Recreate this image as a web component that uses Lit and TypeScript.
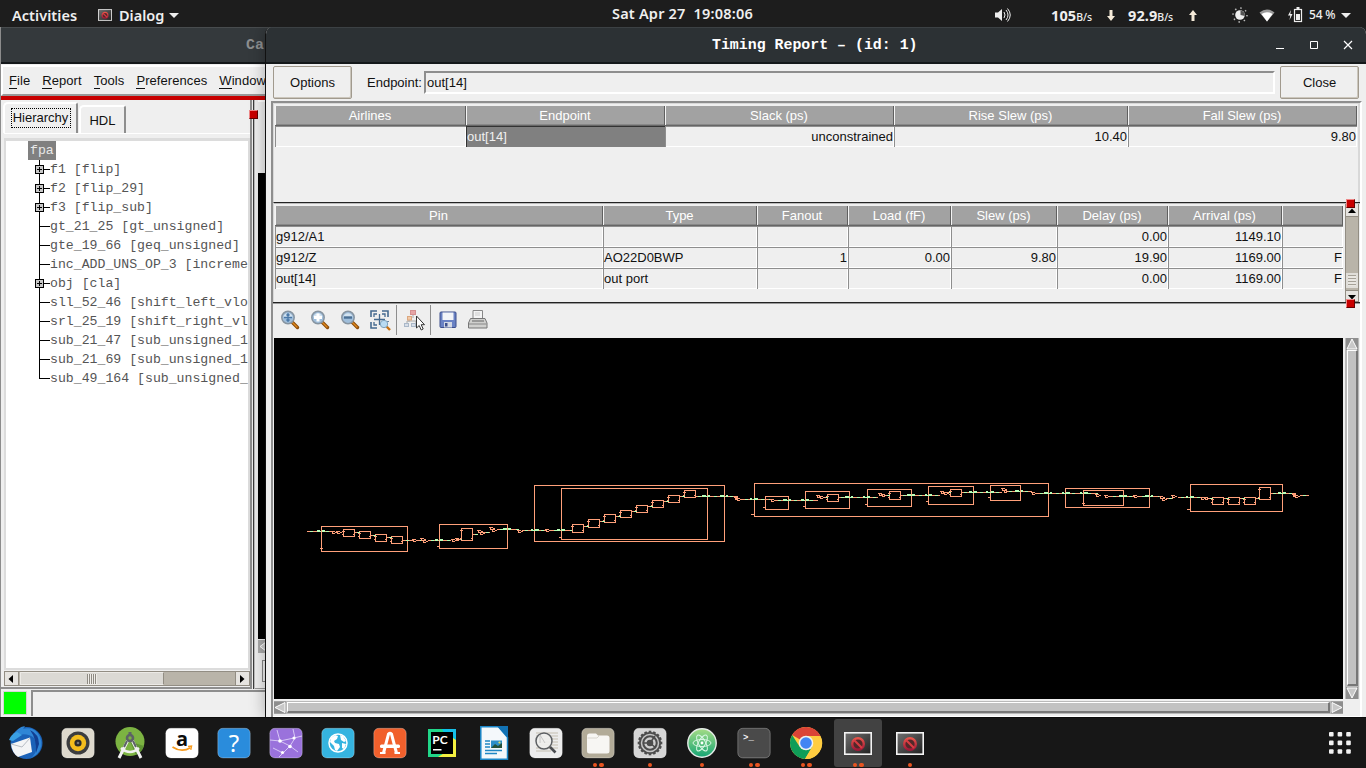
import { LitElement, html, svg, css } from "lit";
import { customElement } from "lit/decorators.js";

/* ---------- schematic data, in screen units of the viewer canvas ---------- */

const BLOCKS: number[][] = [
  [321, 526, 86, 25], [439, 524, 68, 24], [461, 528, 11, 12],
  [343, 529, 11, 7], [359, 531, 11, 7], [375, 534, 11, 7], [391, 536, 11, 7],
  [534, 485, 190, 56], [561, 488, 146, 51],
  [572, 524, 11, 8], [588, 519, 11, 8], [604, 514, 11, 8], [620, 510, 11, 7],
  [636, 505, 11, 7], [652, 500, 11, 7], [668, 495, 11, 7], [684, 490, 11, 7],
  [754, 483, 294, 33], [765, 496, 23, 13], [805, 491, 44, 17], [827, 494, 11, 7],
  [867, 489, 44, 17], [889, 491, 11, 8], [928, 486, 45, 18], [950, 489, 11, 7],
  [990, 485, 30, 15], [1065, 488, 84, 19], [1083, 490, 40, 15],
  [1190, 484, 92, 27], [1212, 497, 11, 7], [1228, 497, 11, 7], [1244, 497, 11, 7],
  [1259, 487, 11, 12],
];

/* x1, x2, y */
const WIRES: number[][] = [
  [307, 333, 531], [354, 360, 532], [370, 376, 535], [386, 392, 537], [403, 413, 540],
  [417, 422, 540], [428, 451, 540], [457, 462, 539], [472, 478, 534], [483, 490, 532],
  [497, 519, 529], [522, 546, 530], [551, 572, 530],
  [583, 589, 526], [599, 605, 521], [615, 621, 516], [631, 637, 511], [647, 653, 506],
  [663, 669, 501], [679, 685, 496], [695, 738, 496], [742, 771, 499], [775, 818, 500],
  [823, 828, 497], [838, 878, 497], [884, 890, 495], [900, 940, 495], [946, 951, 492],
  [961, 1002, 492], [1006, 1032, 491], [1037, 1098, 493], [1110, 1135, 496],
  [1139, 1161, 496], [1166, 1173, 498], [1178, 1201, 497], [1207, 1213, 498],
  [1223, 1229, 498], [1239, 1245, 498], [1255, 1260, 498], [1270, 1296, 493],
  [1300, 1309, 495],
];

/* green port flags: x, y, width */
const PORTS: number[][] = [
  [317, 530, 3], [322, 530, 3], [435, 539, 3], [440, 539, 3], [503, 528, 4], [508, 528, 3],
  [531, 529, 2], [535, 529, 4], [557, 529, 3], [561, 529, 4], [702, 495, 4], [708, 495, 2],
  [720, 495, 4], [726, 495, 2], [750, 498, 2], [754, 498, 4], [783, 499, 4], [789, 499, 2],
  [801, 499, 3], [806, 499, 3], [845, 496, 4], [851, 496, 2], [863, 496, 2], [867, 496, 3],
  [907, 494, 4], [912, 494, 3], [925, 494, 2], [929, 494, 3], [969, 491, 3], [974, 491, 3],
  [986, 491, 2], [991, 491, 3], [1015, 490, 4], [1021, 490, 2], [1044, 492, 4], [1050, 492, 2],
  [1062, 492, 2], [1066, 492, 4], [1080, 492, 2], [1084, 492, 4], [1119, 495, 4], [1124, 495, 3],
  [1145, 495, 4], [1151, 495, 2], [1186, 496, 2], [1190, 496, 4], [1278, 492, 3], [1283, 492, 3],
];

const GATES: number[][] = [
  [332, 532], [337, 532], [413, 540], [421, 539], [423, 541], [452, 540], [456, 539],
  [478, 531], [480, 533], [490, 528], [492, 530], [518, 531], [546, 530],
  [735, 498], [737, 499], [771, 500], [817, 496], [820, 497], [879, 494], [882, 495],
  [941, 492], [944, 493], [1002, 489], [1004, 491], [1032, 493], [1096, 495], [1105, 496],
  [1134, 496], [1160, 497], [1162, 499], [1172, 496], [1201, 498], [1205, 498],
  [1293, 495], [1295, 496],
];

const STUBS: number[][] = [
  [321, 548], [438, 546], [560, 537], [752, 514], [764, 507], [804, 506], [866, 504],
  [927, 501], [989, 497], [1083, 503], [1188, 509],
];

function schematic() {
  const smallBlocks = BLOCKS.filter((b) => b[2] === 11);
  return svg`
    ${BLOCKS.map((b) => svg`<rect x=${b[0] + 0.5} y=${b[1] + 0.5} width=${b[2]} height=${b[3]}></rect>`)}
    ${smallBlocks.map((b) => svg`<path d="M${b[0] - 1} ${b[1] + 2.5}h3M${b[0] - 1} ${b[1] + b[3] - 1.5}h2M${b[0] + 10} ${b[1] + b[3] - 1.5}h2"></path>`)}
    ${WIRES.map((w) => svg`<path d="M${w[0]} ${w[2] + 0.5}H${w[1]}"></path>
      <path class="live" d="M${w[0] + 3} ${w[2] + 0.5}H${w[1]}"></path>`)}
    ${GATES.map(([x, y]) => svg`<path d="M${x + 0.5} ${y - 1}v3M${x - 1} ${y - 0.5}h4M${x} ${y + 1.5}h3M${x + 3} ${y + 0.5}h2"></path>`)}
    ${STUBS.map((s) => svg`<path d="M${s[0] - 1} ${s[1] + 0.5}h3"></path>`)}
    ${PORTS.map((p) => svg`<rect class="port" x=${p[0]} y=${p[1]} width=${p[2]} height="2"></rect>`)}
  `;
}

/* ---------- table data ---------- */

const ENDPOINT_HEAD = ["Airlines", "Endpoint", "Slack (ps)", "Rise Slew (ps)", "Fall Slew (ps)"];
const PIN_HEAD = ["Pin", "Type", "Fanout", "Load (fF)", "Slew (ps)", "Delay (ps)", "Arrival (ps)", ""];
const PIN_ROWS = [
  ["g912/A1", "", "", "", "", "0.00", "1149.10", ""],
  ["g912/Z", "AO22D0BWP", "1", "0.00", "9.80", "19.90", "1169.00", "F"],
  ["out[14]", "out port", "", "", "", "0.00", "1169.00", "F"],
];

const TREE: { label: string; branch?: boolean }[] = [
  { label: "f1 [flip]", branch: true },
  { label: "f2 [flip_29]", branch: true },
  { label: "f3 [flip_sub]", branch: true },
  { label: "gt_21_25 [gt_unsigned]" },
  { label: "gte_19_66 [geq_unsigned]" },
  { label: "inc_ADD_UNS_OP_3 [increme" },
  { label: "obj [cla]", branch: true },
  { label: "sll_52_46 [shift_left_vlo" },
  { label: "srl_25_19 [shift_right_vl" },
  { label: "sub_21_47 [sub_unsigned_1" },
  { label: "sub_21_69 [sub_unsigned_1" },
  { label: "sub_49_164 [sub_unsigned_" },
];

/* ---------- icons ---------- */

const lens = (mark: unknown) => html`<svg class="tool" width="22" height="22" viewBox="0 0 22 22">
  <path d="M13 13l5.500 5.500" stroke="#8a4a08" stroke-width="3.400" stroke-linecap="round"></path>
  <path d="M13 13l5 5" stroke="#e08a20" stroke-width="1.400" stroke-linecap="round"></path>
  <circle cx="9" cy="8.500" r="6.200" fill="#9fbedb" stroke="#8794a0" stroke-width="1.500"></circle>
  <path d="M4.500 8a4.600 4.600 0 0 1 9 0q-4.500 2-9 0z" fill="#d3e3f0"></path>${mark}</svg>`;

const dialogIcon = (w: number, h: number) => html`<svg width=${w} height=${h} viewBox="0 0 28 23">
  <defs><linearGradient id="dg" x1="0" y1="0" x2="1" y2="1"><stop offset="0" stop-color="#707070"></stop><stop offset="1" stop-color="#202020"></stop></linearGradient>
  <linearGradient id="rd" x1="0" y1="0" x2="0" y2="1"><stop offset="0" stop-color="#e8544a"></stop><stop offset="1" stop-color="#a01838"></stop></linearGradient></defs>
  <rect x=".8" y=".8" width="26.400" height="21.400" fill="url(#dg)" stroke="#f4f4f4" stroke-width="1.600"></rect>
  <circle cx="14" cy="12" r="5.800" fill="#52282a" stroke="url(#rd)" stroke-width="2.400"></circle>
  <path d="M10 8l8 8" stroke="#d83c42" stroke-width="2.200"></path></svg>`;

const tile = (fill: string, inner: unknown) => html`<svg width="34" height="34" viewBox="0 0 34 34">
  <rect x=".8" y="2.300" width="32.400" height="29.600" rx="5" fill=${fill} stroke="#ffffff" stroke-opacity=".28"></rect>${inner}</svg>`;

const star = [0, 60, 120].map((a) => svg`<ellipse cx="17" cy="17" rx="9" ry="3.500" transform="rotate(${a} 17 17)" fill="none" stroke="#d9f7e4" stroke-width="1"></ellipse>`);
const teeth = Array.from({ length: 16 }, (_, i) => svg`<rect x="15.700" y="4.700" width="2.600" height="4" fill="#4d4d4d" transform="rotate(${i * 22.5} 17 17)"></rect>`);

const DOCK: { icon: unknown; dots: number; active?: boolean }[] = [
  { dots: 0, icon: html`<svg width="36" height="36" viewBox="0 0 36 36">
    <circle cx="18.500" cy="18" r="16" fill="#1b62b8"></circle>
    <path d="M4 12Q9 2 17 1L15 4q12-3 17 8q4 10-3 17l-7 5Q33 25 26 13Q18 6 4 12z" fill="#2f86d6"></path>
    <path d="M22 5q9 4 9 14l-3 9q1-14-6-23z" fill="#123f92"></path>
    <path d="M1 15q2-6 8-8l5 3-9 6z" fill="#3aa0e4"></path>
    <path d="M3 19L22 12.500 24 27 10 32Q4 28 3 19z" fill="#f3f4f6"></path>
    <path d="M3 19l11 3 8-9" fill="none" stroke="#b7bcc4" stroke-width="1"></path>
    <path d="M2 23l2 5 4 3q-5-3-6-8z" fill="#2a1560"></path></svg>` },
  { dots: 0, icon: tile("#ded9cd", svg`<circle cx="17" cy="17" r="11.500" fill="#3c3d3f"></circle><circle cx="17" cy="17" r="8.200" fill="#f4bd1c"></circle><circle cx="17" cy="17" r="3.600" fill="#2b2b2b"></circle><circle cx="17" cy="17" r="1.300" fill="#777"></circle>`) },
  { dots: 0, icon: html`<svg width="34" height="34" viewBox="0 0 34 34">
    <circle cx="17" cy="15.500" r="14.500" fill="#7cb342"></circle><path d="M17 15.500L31 20a14.500 14.500 0 0 1-8 9z" fill="#5f9433"></path>
    <path d="M15 14L6 32M19 14l9 18" stroke="#f1f1f1" stroke-width="3"></path><path d="M8 22q9 8 18 0" fill="none" stroke="#f1f1f1" stroke-width="2.400"></path>
    <circle cx="17" cy="12" r="3" fill="none" stroke="#5d6266" stroke-width="2.600"></circle><rect x="15.500" y="6" width="3" height="4" fill="#5d6266"></rect><path d="M14 15l-3 6M20 15l3 6" stroke="#5d6266" stroke-width="2"></path></svg>` },
  { dots: 0, icon: tile("#ffffff", svg`<text x="17" y="20" text-anchor="middle" font-family="Open Sans, sans-serif" font-weight="700" font-size="20" fill="#0b0b0b">a</text>
    <path d="M7.500 21q9 6 18 .8" fill="none" stroke="#f79a1c" stroke-width="1.700"></path><path d="M23 20.500l3.600-.5-.8 3.800" fill="none" stroke="#f79a1c" stroke-width="1.300"></path>`) },
  { dots: 0, icon: tile("#2a8cdc", svg`<text x="17" y="25.500" text-anchor="middle" font-family="Noto Sans, sans-serif" font-size="24" fill="#ffffff">?</text>`) },
  { dots: 0, icon: tile("#9a72dc", svg`<path d="M1 14l10 1 14-3 8-2M11 15l10 5 5-8-2-9M21 20l-7 7-4 4M14 27L4 22M21 20l8 6M11 15L8 4" stroke="#d8c8f6" stroke-width="1" fill="none"></path>
    <circle cx="11" cy="15" r="1.800" fill="#fff"></circle><circle cx="25" cy="12" r="1.600" fill="#fff"></circle><circle cx="21" cy="20.500" r="1.800" fill="#fff"></circle><circle cx="13.500" cy="26.500" r="1.600" fill="#fff"></circle>`) },
  { dots: 0, icon: tile("#35b4e0", svg`<circle cx="17" cy="17" r="9" fill="none" stroke="#ffffff" stroke-width="1.500"></circle>
    <path d="M10 12l4-3 3 1-1 3-3 2 1 2 4 1 1 3-3 4-2-1-1-4-4-4zM19 9l3 1 3 5-2 1-3-2zM21 17l4 1-2 5-2-1z" fill="#fff"></path>`) },
  { dots: 0, icon: tile("#f1602c", svg`<path d="M10.500 27L15.500 8q1.500-1.500 3 0l5 19" fill="none" stroke="#fff" stroke-width="3"></path><rect x="7" y="18.500" width="20" height="3.600" rx="1.500" fill="#fff"></rect><path d="M7 27h5.500M21.500 27H27" stroke="#fff" stroke-width="2.200"></path>`) },
  { dots: 0, icon: html`<svg width="34" height="34" viewBox="0 0 34 34"><rect x="3" y="3" width="28" height="28" fill="#21d789"></rect><path d="M17 3h9l5 5v9l-8-2z" fill="#08c4ea"></path><path d="M22 3h9v9z" fill="#17c0e8"></path><path d="M25 10l6 4v17H13l8-5z" fill="#f4f040"></path>
    <rect x="6" y="6" width="22" height="22" fill="#000"></rect><text x="7.300" y="17.800" font-family="Lato, sans-serif" font-weight="700" font-size="12" fill="#fff">PC</text><rect x="8" y="23" width="8.500" height="1.500" fill="#fff"></rect></svg>` },
  { dots: 0, icon: html`<svg width="34" height="36" viewBox="0 0 34 36"><path d="M3.800 1.800h17.700l9 10.500v22H3.800z" fill="#f4f8fb" stroke="#1a86c8" stroke-width="1.500"></path><path d="M20 1h11v12z" fill="#1272b4"></path>
    <path d="M8 16h5M8 19h5M8 22h5M8 25.500h17M8 28.500h12" stroke="#1f86c4" stroke-width="1.400"></path><rect x="14" y="15.500" width="11" height="7.500" fill="#2c8fc9"></rect><path d="M14 23l4-4 3 2 4-3v5z" fill="#25523a"></path><circle cx="22.500" cy="17.500" r="1.100" fill="#e8e25a"></circle></svg>` },
  { dots: 0, icon: tile("#ececec", svg`<path d="M7 7h22M7 10h22M7 13h22M7 16h22M7 19h22M7 22h22M7 25h15" stroke="#c4beb0" stroke-width="1"></path><circle cx="15" cy="15" r="8" fill="#efefee" fill-opacity=".92" stroke="#5c5f63" stroke-width="1.500"></circle><path d="M11 17V9l5 8" fill="none" stroke="#c8c8c8"></path><path d="M21 21l5.500 5.500" stroke="#4a4c50" stroke-width="2.600"></path>`) },
  { dots: 2, icon: tile("#b2ab98", svg`<path d="M6 10.500q0-3 2.500-3h6.500l2 2h9q2.500 0 2.500 2.500v13q0 2.500-2.500 2.500H8.500Q6 27.500 6 25z" fill="#f7f6f3"></path><path d="M6.500 12h9.500l2-2" fill="none" stroke="#d9d6cf"></path>`) },
  { dots: 1, icon: tile("#d6d6d6", svg`${teeth}<circle cx="17" cy="17" r="11" fill="#4d4d4d"></circle><circle cx="17" cy="17" r="8.500" fill="none" stroke="#c6c6c6" stroke-width="1.500"></circle><circle cx="17" cy="17" r="4.500" fill="none" stroke="#d0d0d0" stroke-width="2.400"></circle><path d="M17 17L22 10M17 17l6 5M17 17H10" stroke="#4d4d4d" stroke-width="1.600"></path><circle cx="17" cy="17" r="2.800" fill="#4d4d4d"></circle>`) },
  { dots: 1, icon: html`<svg width="34" height="34" viewBox="0 0 34 34"><defs><linearGradient id="at" x1="0" y1="0" x2="0" y2="1"><stop offset="0" stop-color="#a5dc86"></stop><stop offset="1" stop-color="#15a574"></stop></linearGradient></defs><circle cx="17" cy="17" r="14.200" fill="url(#at)" stroke="#e6ebe8" stroke-width="1.400"></circle>${star}<circle cx="17" cy="17" r="1.400" fill="#fff"></circle></svg>` },
  { dots: 2, icon: tile("#4a4a4a", svg`<text x="6" y="14" font-family="Liberation Mono, monospace" font-weight="700" font-size="9" fill="#f2f2f2">&gt;_</text>`) },
  { dots: 2, icon: html`<svg width="34" height="34" viewBox="0 0 34 34"><circle cx="17" cy="17" r="16" fill="#ffcd40"></circle><path d="M17 17L3.140 9A16 16 0 0 1 31.500 10H17z" fill="#db4437"></path><path d="M3.140 9A16 16 0 0 0 16 33L23.500 20.800 17 17 10.500 20.500z" fill="#0f9d58"></path><path d="M16 33l7-12 8.500-11A16 16 0 0 1 16 33z" fill="#ffcd40"></path><circle cx="17" cy="17" r="7.300" fill="#f1f1f1"></circle><circle cx="17" cy="17" r="5.800" fill="#4285f4"></circle></svg>` },
  { dots: 2, active: true, icon: dialogIcon(28, 23) },
  { dots: 1, icon: dialogIcon(28, 23) },
];

const arrow = (d: string) => html`<svg width="14" height="12" viewBox="0 0 14 12"><path d=${d} fill="#000"></path></svg>`;

@customElement("app-root")
export class AppRoot extends LitElement {
  static styles = css`
    :host { display: flex; flex-direction: column; width: 1366px; height: 768px; overflow: hidden; background: #171717; font: 13px "Liberation Sans", Arial, sans-serif; color: #111; white-space: pre; }
    * { box-sizing: border-box; }
    svg { display: block; flex: none; }

    /* top bar */
    .topbar { height: 27px; flex: none; display: grid; grid-template-columns: 612px 142px 1fr; background: #1d1d1d; color: #efefef; font: 600 14.500px "Noto Sans", sans-serif; line-height: 26px; }
    .left { display: flex; align-items: center; padding-left: 12px; }
    .activities { width: 86px; letter-spacing: .05px; }
    .appname { padding-left: 7px; width: 57px; letter-spacing: 0; }
    .date { letter-spacing: .2px; }
    .right { display: flex; align-items: center; padding-left: 240px; }
    .net { display: flex; align-items: baseline; font-weight: 700; padding-top: 2px; letter-spacing: .1px; }
    .net small { font-size: 10.500px; font-weight: 500; letter-spacing: -.1px; }
    .down { width: 77px; margin-left: 39px; }
    .up { width: 104px; }
    .dir { margin-left: auto; margin-right: 13px; align-self: center; }
    .up .dir { margin-right: 35px; }
    .sun { margin-right: 11px; }
    .wifi { margin-right: 13px; }
    .pct { font-size: 12px; font-weight: 500; width: 32px; padding-left: 6px; letter-spacing: -.2px; }
    .endcaret { margin-left: auto; margin-right: 15px; }

    /* desktop with overlapping windows */
    .desktop { height: 690px; flex: none; position: relative; overflow: hidden; background: #222526; }
    .back { position: absolute; left: 0; top: 0; width: 272px; height: 690px; overflow: hidden; display: flex; flex-direction: column; border-left: 1px solid #8c8c8c; background: #efefef; }
    .front { position: absolute; left: 265px; top: 0; width: 1101px; height: 690px; display: flex; flex-direction: column; border-left: 1px solid #111; background: #efefef; box-shadow: 0 0 16px rgba(0,0,0,.3); border-radius: 7px 7px 0 0; overflow: hidden; }
    .title { height: 37px; flex: none; font: 700 14.900px "Liberation Mono", monospace; line-height: 36px; border-bottom: 2px solid #14181a; }
    .back .title { background: #34393c; color: #8c8e8f; padding-left: 246px; margin-left: -1px; border-top: 1px solid #484c4e; position: relative; line-height: 34px; }
    .front .title { display: flex; align-items: center; background: #2c3134; color: #fff; padding-left: 446px; border-top: 1px solid #3c4144; line-height: 34px; }
    .controls { display: flex; align-items: center; margin-left: auto; padding-right: 13px; gap: 23px; }

    /* back window */
    .menu { height: 31px; flex: none; display: flex; align-items: center; padding-left: 6px; gap: 12px; border-top: 2px solid #fff; border-left: 2px solid #fff; border-bottom: 2px solid #999; margin-top: 1px; }
    .menu u { text-decoration: none; border-bottom: 1px solid #111; }
    .menu span { line-height: 14px; letter-spacing: .07px; }
    .red { height: 4px; background: #c80000; flex: none; }
    .work { height: 589px; flex: none; display: flex; position: relative; }
    .pane { width: 251px; flex: none; display: flex; flex-direction: column; padding-left: 3px; border-right: 2px solid #8e8e8e; border-bottom: 2px solid #8e8e8e; }
    .tabs { display: flex; align-items: flex-end; height: 33px; padding-top: 2px; flex: none; }
    .tab { display: flex; align-items: center; justify-content: center; border-top: 2px solid #fff; border-left: 2px solid #fff; border-right: 2px solid #8e8e8e; border-radius: 5px 3px 0 0; }
    .tab.on { width: 75px; height: 31px; margin-left: -1px; }
    .tab.off { width: 47px; height: 28px; margin-left: 1px; }
    .focus { border: 1px dotted #000; height: 20px; width: 60px; line-height: 18px; text-align: center; margin-top: -2px; }
    .sheet { flex: 1; display: flex; flex-direction: column; padding-top: 4px; border-top: 1px solid #fff; min-height: 0; }
    .tree { flex: 1; background: #fff; border: 2px solid #dcdcdc; border-top-width: 3px; overflow: hidden; padding-left: 22px; color: #555; font: 13.200px "Liberation Mono", monospace; }
    .root { display: block; width: 28px; height: 19px; line-height: 19px; background: #808080; color: #e8e8e8; padding-left: 2px; }
    .node { display: flex; height: 19px; line-height: 19px; }
    .hbar { height: 15px; margin: 1px 0; flex: none; display: flex; background: #b9b4a9; border: 1px solid #928d83; }
    .hbtn { width: 14px; background: #e6e4e0; display: flex; align-items: center; border-right: 1px solid #928d83; }
    .hthumb { width: 144px; background: #dbd9d4; border: 1px solid #eceae6; border-right-color: #928d83; margin-left: 1px; display: flex; align-items: center; justify-content: center; }
    .grip { width: 10px; height: 10px; background: repeating-linear-gradient(90deg, #8e8a82 0 1px, #efede9 1px 2px); }
    .hbar .last { margin-left: auto; border-left: 1px solid #928d83; border-right: 0; }
    .sash { width: 2px; margin-left: 1px; background: #3c3c3c; border-right: 1px solid #bbb; }
    .knob { position: absolute; width: 9px; height: 9px; background: #c80000; border: 1px solid #e88; border-right-color: #600; border-bottom-color: #600; }
    .k0 { left: 248px; top: 10px; }
    .viewer { flex: 1; display: flex; flex-direction: column; padding-left: 3px; border-bottom: 1px solid #999; }
    .viewer .tabtop { height: 73px; border-top: 2px solid #fff; }
    .viewer .ink { height: 466px; background: #000; }
    .viewer .sc { height: 13px; margin-top: 1px; background: #aaa; }
    .viewer .fr { height: 22px; margin: 7px 0 0 4px; border: 1px solid #888; border-right: 0; }
    .status { flex: 1; display: flex; padding-top: 1px; }
    .lamp { width: 24px; height: 24px; margin: 1px 5px 0 2px; border: 1px solid #d5d5d5; background: #00ff00; }
    .field { flex: 1; border-top: 2px solid #8e8e8e; border-left: 2px solid #8e8e8e; height: 26px; margin-left: -1px; }

    /* front window */
    .bar { height: 37px; flex: none; display: flex; padding: 2px 6px 0 7px; }
    .button { width: 79px; height: 33px; border: 1px solid #a19a8e; border-radius: 2px; box-shadow: inset -1px -1px 0 #cbc6bc; display: flex; align-items: center; justify-content: center; }
    .lbl { width: 72px; padding-left: 15px; line-height: 33px; }
    .entry { width: 851px; height: 23px; margin-top: 5px; margin-right: 5px; border: 2px solid #fff; border-top-color: #8e8e8e; border-left-color: #8e8e8e; line-height: 20px; padding-left: 1px; }
    .body { flex: 1; margin-left: 5px; width: 1091px; border-top: 2px solid #8e8e8e; border-left: 2px solid #8e8e8e; border-right: 2px solid #fff; display: flex; flex-direction: column; position: relative; box-shadow: inset 0 -1px 0 #fff; }
    .box { padding: 3px 0 0 1px; border-left: 1px solid #d8d8d8; flex: none; }
    .top { height: 99px; border-top: 1px solid #d8d8d8; border-right: 2px solid #d8d8d8; padding-top: 2px; }
    .g1 { display: grid; grid-template-columns: 191px 199px 229px 234px 229px; }
    .g2 { display: grid; grid-template-columns: 328px 154px 91px 103px 106px 111px 114px 61px; }
    .th { height: 20px; background: #a2a2a2; color: #fff; line-height: 20px; text-align: center; border-right: 1px solid #606060; border-bottom: 1px solid #666; box-shadow: inset 1px 0 0 #f4f4f4, inset 0 -1px 0 #888; }
    .td { height: 21px; line-height: 20px; text-align: right; border-left: 1px solid #8e8e8e; border-top: 1px solid #8e8e8e; box-shadow: inset -1px -1px 0 #fff; padding-right: 1px; }
    .td.txt { text-align: left; }
    .td.pick { background: #808080; color: #f0f0f0; border-color: #333; box-shadow: none; }
    .mid { height: 100px; display: flex; border-top: 1px solid #222; box-shadow: inset 0 1px 0 #bbb; border-left: 1px solid #d8d8d8; flex: none; }
    .mid .pins { width: 1070px; padding: 3px 0 0 1px; }
    .vbar { width: 14px; margin-left: 1px; background: #b9b4a9; display: flex; flex-direction: column; border: 1px solid #928d83; border-top: 0; border-bottom: 0; margin-top: 1px; }
    .vbtn { height: 13px; background: #e6e4e0; border-bottom: 1px solid #928d83; }
    .vthumb { height: 15px; margin-top: 56px; background: repeating-linear-gradient(#a5a197 0 1px, #e9e7e2 1px 3px); border: 2px solid #e0ded9; }
    .vbar .last { margin-top: 2px; border-top: 1px solid #928d83; height: 12px; }
    .tools { height: 36px; flex: none; border-top: 1px solid #222; box-shadow: inset 0 1px 0 #999; display: flex; align-items: center; padding-left: 6px; padding-bottom: 2px; }
    .tool { margin-right: 8px; }
    .sep { width: 1px; height: 30px; background: #8e8e8e; margin-right: 6px; margin-left: -3px; }
    .k1 { left: 1073px; top: 96px; }
    .k2 { left: 1073px; top: 196px; }
    .stage { height: 361px; flex: none; display: flex; padding-left: 1px; }
    .canvas { width: 1069px; height: 361px; background: #000; }
    .canvas * { fill: none; stroke: #ffa07a; stroke-width: 1; shape-rendering: crispEdges; }
    .canvas .live { stroke: #b4ffb4; stroke-dasharray: 3 5; }
    .canvas .port { fill: #b8ffb8; stroke: none; }
    .mbar { background: #b9b9b9; display: flex; }
    .mbar.v { width: 14px; margin-left: 2px; flex-direction: column; }
    .mbar.h { height: 13px; width: 1069px; margin: 2px 0 0 1px; }
    .mthumb { flex: 1; background: #c2c2c2; border: 1px solid #fff; border-right: 2px solid #777; border-bottom: 2px solid #777; }
    .v .mthumb { border-right-width: 2px; margin: 0 1px 1px 2px; }
    .h .mthumb { margin: 1px 1px; }

    /* dock */
    .dock { height: 51px; flex: none; background: #171717; display: flex; align-items: flex-start; padding: 1px 0 0 2px; border-top: 1px solid #0c0c0c; }
    .slot { width: 48px; height: 48px; margin-right: 4px; display: grid; place-items: center; position: relative; border-radius: 3px; flex: none; }
    .slot.active { background: #424242; }
    .dots { position: absolute; left: 0; right: 0; bottom: 0; display: flex; justify-content: center; gap: 2px; }
    .dots i { width: 4.500px; height: 4.500px; border-radius: 50%; background: #e95420; }
    .apps { margin: 13px 0 0 391px; }
  `;

  private nodeMark(branch: boolean, last: boolean) {
    return html`<svg width="22" height="19" viewBox="0 0 22 19" shape-rendering="crispEdges">
      <path d="M11.500 0V${last ? 10 : 19}M11 9.500H22" stroke="#000" fill="none"></path>
      ${branch ? svg`<rect x="7.500" y="5.500" width="8" height="8" fill="#c8c8c8" stroke="#000"></rect><path d="M9 9.500h5M11.500 7v5" stroke="#000"></path>` : ""}
    </svg>`;
  }

  private topbar() {
    return html`<div class="topbar">
      <div class="left"><span class="activities">Activities</span>${dialogIcon(14, 12)}<span class="appname">Dialog</span>
        <svg width="10" height="5"><path d="M0 0h10l-5 5z" fill="#eee"></path></svg></div>
      <div class="date">Sat Apr 27  19:08:06</div>
      <div class="right">
        <svg width="18" height="16" viewBox="0 0 18 16"><path d="M1 5.500h3L8 2v12L4 10.500H1z" fill="#eee"></path><path d="M10 5q2 3 0 6M12 3q4 5 0 10M13.500 1.500q5.500 6.500 0 13" stroke="#eee" fill="none"></path></svg>
        <div class="net down">105<small>B/s</small><svg class="dir" width="8" height="12"><path d="M2.500 0h3v6H8l-4 5-4-5h2.500z" fill="#f4ead8"></path></svg></div>
        <div class="net up">92.9<small>B/s</small><svg class="dir" width="8" height="12"><path d="M2.500 11h3V5H8L4 0 0 5h2.500z" fill="#f4ead8"></path></svg></div>
        <svg class="sun" width="16" height="16" viewBox="0 0 16 16"><circle cx="8" cy="8" r="7" fill="none" stroke="#bbb" stroke-width="1.500" stroke-dasharray="1.500 4"></circle><circle cx="8" cy="8" r="4.800" fill="#eee"></circle><path d="M8.500 3.200V8l4.300 1A5 5 0 0 0 8.500 3.200z" fill="#555"></path></svg>
        <svg class="wifi" width="16" height="13" viewBox="0 0 16 13"><path d="M.5 3.500q7.500-6 15 0L8 12.500z" fill="#9a9a9a"></path><path d="M2.500 5q5.500-3.500 11 0L8 12.500z" fill="#fff"></path></svg>
        <svg width="15" height="16" viewBox="0 0 15 16"><path d="M3 3L0 8.500h2.300L1.500 13 4.500 7H2.300z" fill="#eee"></path><rect x="6.500" y="2.500" width="7" height="12" fill="none" stroke="#eee" stroke-width="1.200"></rect><rect x="8.500" y="0" width="3" height="2" fill="#eee"></rect><rect x="8" y="7" width="4" height="6" fill="#eee"></rect></svg>
        <span class="pct">54 %</span>
        <svg class="endcaret" width="10" height="5"><path d="M0 0h10l-5 5z" fill="#eee"></path></svg>
      </div></div>`;
  }

  private backWindow() {
    const menu = ["File", "Report", "Tools", "Preferences", "Window"];
    return html`<section class="back">
      <div class="title">Ca</div>
      <div class="menu">${menu.map((m) => html`<span><u>${m[0]}</u>${m.slice(1)}</span>`)}</div>
      <div class="red"></div>
      <div class="work">
        <div class="pane">
          <div class="tabs"><div class="tab on"><span class="focus">Hierarchy</span></div><div class="tab off">HDL</div></div>
          <div class="sheet">
            <div class="tree"><span class="root">fpa</span>${TREE.map((n, i) => html`<div class="node">${this.nodeMark(!!n.branch, i === TREE.length - 1)}<span>${n.label}</span></div>`)}</div>
            <div class="hbar"><div class="hbtn">${arrow("M8 2v8L3.500 6z")}</div><div class="hthumb"><div class="grip"></div></div><div class="hbtn last">${arrow("M4 2v8L8.500 6z")}</div></div>
          </div>
        </div>
        <div class="sash"></div>
        <div class="viewer"><div class="tabtop"></div><div class="ink"></div><div class="sc"><svg width="8" height="13"><path d="M8 2L2 6.500 8 11z" fill="#ccc" stroke="#fff"></path></svg></div><div class="fr"></div></div>
        <i class="knob k0"></i>
      </div>
      <div class="status"><div class="lamp"></div><div class="field"></div></div>
    </section>`;
  }

  private frontWindow() {
    const tri = (d: string, w = 12, h = 12) => html`<svg width=${w} height=${h} viewBox="0 0 12 12"><rect width="12" height="12" fill="#8e8e8e"></rect><path d=${d} fill="#c8c8c8" stroke="#fff" stroke-width="1"></path></svg>`;
    return html`<section class="front">
      <div class="title"><span>Timing Report – (id: 1)</span>
        <div class="controls">
          <svg width="10" height="12"><path d="M0 9.500h8" stroke="#fff"></path></svg>
          <svg width="11" height="12"><path d="M1.500 2.500h7v7h-7z" fill="none" stroke="#fff"></path></svg>
          <svg width="10" height="12"><path d="M1 2l8 8M9 2l-8 8" stroke="#fff" stroke-width="1.200"></path></svg>
        </div></div>
      <div class="bar"><div class="button">Options</div><div class="lbl">Endpoint:</div><div class="entry">out[14]</div><div class="button">Close</div></div>
      <div class="body">
        <div class="box top"><div class="g1">
          ${ENDPOINT_HEAD.map((h) => html`<div class="th">${h}</div>`)}
          <div class="td"></div><div class="td txt pick">out[14]</div><div class="td">unconstrained</div><div class="td">10.40</div><div class="td">9.80</div>
        </div></div>
        <div class="mid"><div class="pins"><div class="g2">
          ${PIN_HEAD.map((h) => html`<div class="th">${h}</div>`)}
          ${PIN_ROWS.map((r) => r.map((c, i) => html`<div class=${i < 2 ? "td txt" : "td"}>${c}</div>`))}
        </div></div>
          <div class="vbar"><div class="vbtn">${arrow("M2 9h8L6 4.500z")}</div><div class="vthumb"></div><div class="vbtn last">${arrow("M2 4h8L6 8.500z")}</div></div>
        </div>
        <div class="tools">
          ${lens(svg`<path d="M9 4.500v8M5 8.500h8M7.500 6.500L9 4.800l1.500 1.700M7.500 10.500L9 12.200l1.500-1.700" stroke="#4a78a8" stroke-width="1.300" fill="none"></path>`)}
          ${lens(svg`<path d="M9 4.500v8M5 8.500h8" stroke="#fff" stroke-width="3"></path>`)}
          ${lens(svg`<path d="M5 8.500h8" stroke="#4a7096" stroke-width="2.400"></path>`)}
          <svg class="tool" width="22" height="22" viewBox="0 0 22 22"><path d="M2 8V2h6M13 2h6v6M19 12v1M2 13v6h6" fill="none" stroke="#456a90" stroke-width="1.600"></path><path d="M5 8V5h3M13 5h3v3M5 13v3h3M10.500 5v11M5 10.500h11" fill="none" stroke="#456a90" stroke-width="1.300"></path><path d="M17 17l4 4" stroke="#c87010" stroke-width="2.400"></path><circle cx="15" cy="15" r="3.700" fill="#b9dbf2" stroke="#7fa3bd"></circle></svg>
          <i class="sep"></i>
          <svg class="tool" width="22" height="22" viewBox="0 0 22 22"><path d="M10 5v4M4 15v-3h9v3M6 9v4" stroke="#aaa" fill="none"></path><rect x="7.500" y="1.500" width="5" height="4" fill="#e6a5a5" stroke="#d49090"></rect><rect x="4.500" y="7.500" width="4" height="3.500" fill="#f2c9a8" stroke="#dba880"></rect><rect x="1.500" y="14.500" width="4" height="3" fill="#d7dee8" stroke="#aab8c8"></rect><rect x="8.500" y="14.500" width="4" height="3" fill="#d7dee8" stroke="#aab8c8"></rect><path d="M13.500 7v12l2.700-2.500 2 4.500 2-1-2-4.300h3.300z" fill="#fff" stroke="#333"></path></svg>
          <i class="sep"></i>
          <svg class="tool" width="22" height="22" viewBox="0 0 22 22"><rect x="3" y="3" width="16" height="15.500" rx="1" fill="#6a82c4" stroke="#3c4f8c"></rect><rect x="5.500" y="3.500" width="11" height="7.500" fill="#f2f4f8"></rect><rect x="7" y="13" width="8" height="5.500" fill="#d4d9e4"></rect><rect x="8" y="14" width="2.500" height="3.500" fill="#3c4f8c"></rect></svg>
          <svg class="tool" width="22" height="22" viewBox="0 0 22 22"><path d="M6 1.500h9.500v9H6z" fill="#f4f4f4" stroke="#888"></path><path d="M8 4h5M8 6h5" stroke="#ccc"></path><path d="M3.500 9.500h14.500l2 4.500v5h-18.500v-5z" fill="#d0d0ce" stroke="#777"></path><path d="M2 15h17.500" stroke="#888"></path><path d="M5 12h12" stroke="#8c8c8c" stroke-width="1.600"></path></svg>
        </div>
        <div class="stage">
          <svg class="canvas" viewBox="274 338 1069 361">${schematic()}</svg>
          <div class="mbar v">${tri("M1 11L6 1l5 10z", 14)}<div class="mthumb"></div>${tri("M1 1l5 10 5-10z", 14)}</div>
        </div>
        <div class="mbar h">${tri("M11 1L1 6l10 5z", 12, 13)}<div class="mthumb"></div>${tri("M1 1l10 5-10 5z", 12, 13)}</div>
        <i class="knob k1"></i><i class="knob k2"></i>
      </div>
    </section>`;
  }

  render() {
    const grid = [0, 1, 2];
    return html`${this.topbar()}
      <div class="desktop">${this.backWindow()}${this.frontWindow()}</div>
      <div class="dock">
        ${DOCK.map((d) => html`<div class=${d.active ? "slot active" : "slot"}>${d.icon}<div class="dots">${Array.from({ length: d.dots }, () => html`<i></i>`)}</div></div>`)}
        <svg class="apps" width="23" height="23">${grid.map((r) => grid.map((c) => svg`<rect x=${c * 8.6} y=${r * 8.6} width="4.600" height="4.600" rx="1" fill="#f2f2f2"></rect>`))}</svg>
      </div>`;
  }
}
